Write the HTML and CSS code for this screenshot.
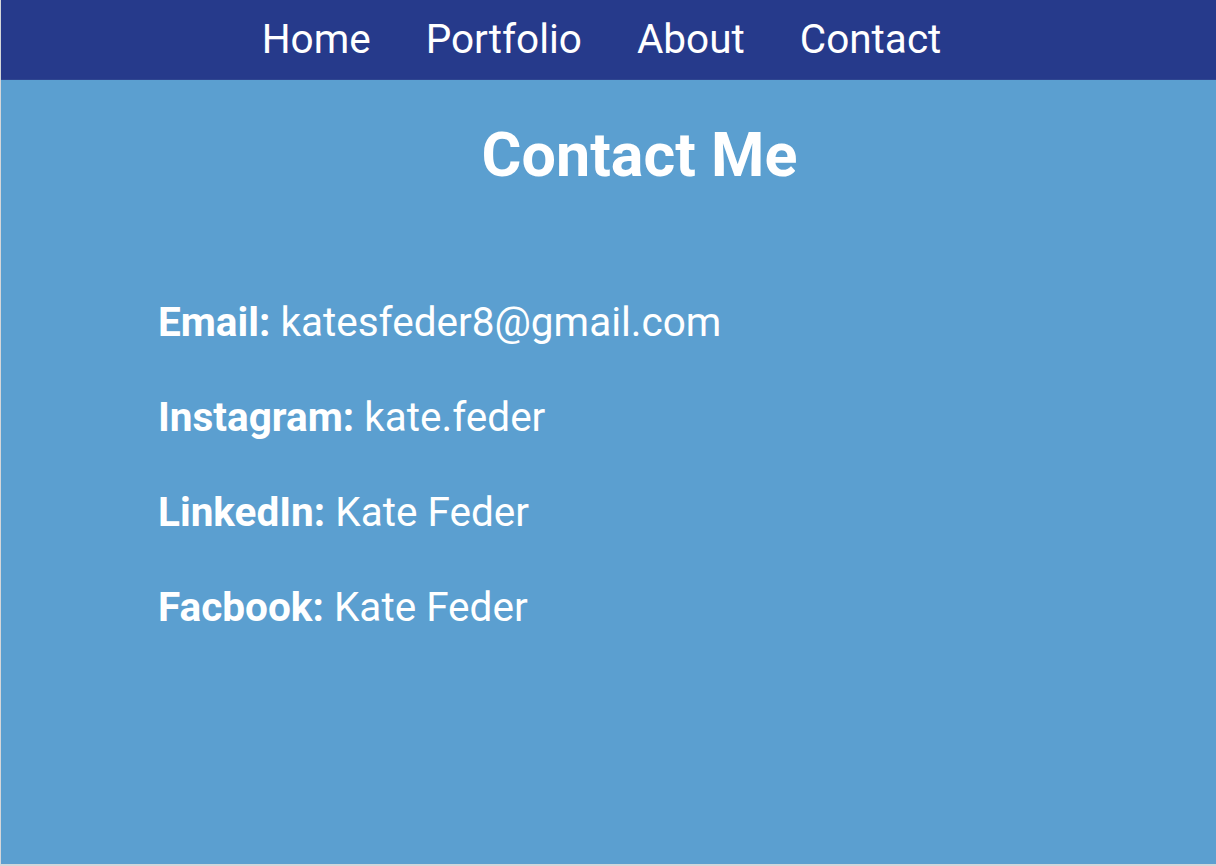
FILE: index.html
```html
<!DOCTYPE html>
<html lang="en">
<head>
<meta charset="utf-8">
<title>Contact Me</title>
<link rel="stylesheet" href="styles.css">
</head>
<body>
<div class="page">
  <nav class="nav">
    <a class="nav-link" href="#">Home</a>
    <a class="nav-link" href="#">Portfolio</a>
    <a class="nav-link" href="#">About</a>
    <a class="nav-link" href="#">Contact</a>
  </nav>
  <main class="main">
    <h1 class="title">Contact Me</h1>
    <ul class="contacts">
      <li class="contact"><strong>Email:</strong> katesfeder8@gmail.com</li>
      <li class="contact"><strong>Instagram:</strong> kate.feder</li>
      <li class="contact"><strong>LinkedIn:</strong> Kate Feder</li>
      <li class="contact"><strong>Facbook:</strong> Kate Feder</li>
    </ul>
  </main>
</div>
</body>
</html>
```
FILE: styles.css
```css
html, body {
  margin: 0;
  padding: 0;
  background: #d4d6d9;
}
body {
  font-family: Roboto, "Liberation Sans", sans-serif;
  color: #fff;
}
.page {
  box-sizing: border-box;
  height: 866px;
  margin-left: 1px;
  padding-bottom: 2px;
  display: flex;
  flex-direction: column;
}
.nav {
  height: 79px;
  background: #263a8b;
  border-bottom: 1px solid #2e4590;
  display: flex;
  justify-content: center;
  align-items: center;
  gap: 55px;
  padding-right: 14px;
}
.nav-link {
  color: #fff;
  text-decoration: none;
  font-size: 40.5px;
  font-weight: 400;
  line-height: 1;
}
.main {
  flex: 1;
  background: #5b9fd0;
  display: flex;
  flex-direction: column;
}
.title {
  margin: 39px 0 0;
  text-align: center;
  font-size: 61px;
  font-weight: 700;
  line-height: 1.2;
  padding-left: 62px;
}
.contacts {
  list-style: none;
  margin: 106px 0 0 157px;
  padding: 0;
  display: flex;
  flex-direction: column;
  gap: 47px;
}
.contact {
  font-size: 40.5px;
  line-height: 48px;
}
.contact strong {
  font-weight: 700;
}
```
